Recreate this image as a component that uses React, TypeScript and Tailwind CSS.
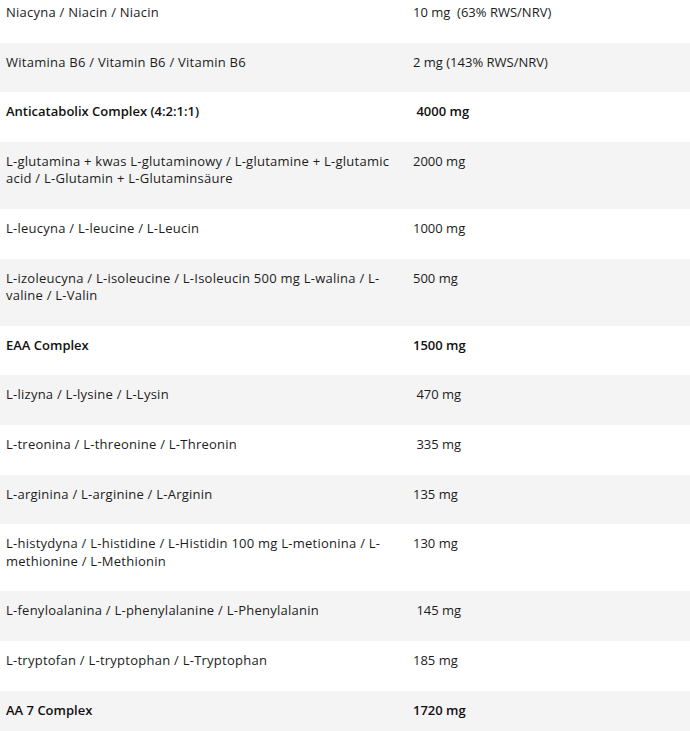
import React from "react";

type Row = { name: string; value: string; bold?: boolean };

const rows: Row[] = [
  { name: "Niacyna / Niacin / Niacin", value: "10 mg\u00a0 (63% RWS/NRV)" },
  { name: "Witamina B6 / Vitamin B6 / Vitamin B6", value: "2 mg (143% RWS/NRV)" },
  { name: "Anticatabolix Complex (4:2:1:1)", value: "\u00a04000 mg", bold: true },
  { name: "L-glutamina + kwas L-glutaminowy / L-glutamine + L-glutamic acid / L-Glutamin + L-Glutaminsäure", value: "2000 mg" },
  { name: "L-leucyna / L-leucine / L-Leucin", value: "1000 mg" },
  { name: "L-izoleucyna / L-isoleucine / L-Isoleucin 500 mg L-walina / L-valine / L-Valin", value: "500 mg" },
  { name: "EAA Complex", value: "1500 mg", bold: true },
  { name: "L-lizyna / L-lysine / L-Lysin", value: "\u00a0470 mg" },
  { name: "L-treonina / L-threonine / L-Threonin", value: "\u00a0335 mg" },
  { name: "L-arginina / L-arginine / L-Arginin", value: "135 mg" },
  { name: "L-histydyna / L-histidine / L-Histidin 100 mg L-metionina / L-methionine / L-Methionin", value: "130 mg" },
  { name: "L-fenyloalanina / L-phenylalanine / L-Phenylalanin", value: "\u00a0145 mg" },
  { name: "L-tryptofan / L-tryptophan / L-Tryptophan", value: "185 mg" },
  { name: "AA 7 Complex", value: "1720 mg", bold: true },
];

export default function App() {
  return (
    <div className="w-[690px] h-[731px] overflow-hidden bg-white" style={{ fontFamily: '"Open Sans", "Liberation Sans", sans-serif' }}>
      <div className="-mt-[7px] flex flex-col">
        {rows.map((r, i) => (
          <div
            key={i}
            className={`flex text-[13px] leading-[17.3px] ${i % 2 === 1 ? "bg-[#f4f4f4]" : "bg-white"} ${r.bold ? "font-semibold text-[#111]" : "text-[#1c1c1c]"}`}
          >
            <div className={`w-[407px] shrink-0 pl-[6px] pr-[6px] pt-[11px] pb-[21.4px] ${r.bold ? "tracking-normal" : "tracking-[0.25px]"}`}>{r.name}</div>
            <div className="flex-1 pl-[6px] pr-[6px] pt-[11px] pb-[21.4px] whitespace-pre tracking-normal">{r.value}</div>
          </div>
        ))}
      </div>
    </div>
  );
}
